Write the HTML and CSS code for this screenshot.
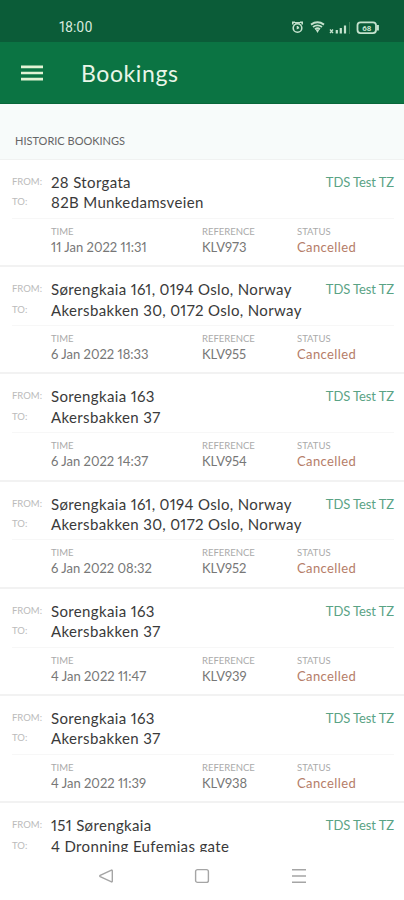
FILE: index.html
```html
<!DOCTYPE html>
<html lang="en">

<head>
    <meta charset="UTF-8">
    <meta name="viewport" content="width=device-width, initial-scale=1.0">
    <title>Bookings</title>
    <link rel="stylesheet" href="styles.css">
</head>

<body>

    <div class="status-bar">
        <span class="clock">18:00</span>
        <svg class="status-icons" width="90" height="18" viewBox="0 0 90 18" fill="none" stroke="#c5e2cd" stroke-width="1.6">
            <!-- Alarm -->
            <circle cx="7.5" cy="10" r="4.3" />
            <path d="M2.800 6.500V4.200h2.200M12.200 6.500V4.200h-2.200M5 4.800h5M7.500 8V10.300l1.600-.8" />
            <!-- Wifi -->
            <path d="M21 6.600q6.500-4.600 13 0M23 9q4.500-3.200 9 0M25 11.200q2.500-1.800 5 0" stroke-width="1.900" />
            <path d="M25.500 11.500h4l-2 3.500z" fill="#c5e2cd" stroke="none" />
            <!-- Signal -->
            <path d="M40 11.500l3 3.500M43 11.500l-3 3.500" stroke-width="1.300" />
            <path d="M46.800 15.500v-3.500M50.800 15.500v-5.500M55 15.500v-8" stroke-width="2.200" />
            <path d="M59.500 4v12" stroke="#3d8058" stroke-width="1" />
            <!-- Battery -->
            <rect x="67.500" y="4.300" width="18.500" height="10.800" rx="3" stroke-width="1.800" />
            <path d="M87.800 7v5.500" stroke-width="2.200" />
            <text class="battery-text" x="76.800" y="12.700" text-anchor="middle">68</text>
        </svg>
    </div>

    <header class="app-bar">
        <svg class="menu-icon" width="22" height="16" viewBox="0 0 22 16" stroke="#e2f3d4" stroke-width="2.600">
            <path d="M0 1.900h22M0 8h22M0 14.100h22" />
        </svg>
        <h1>Bookings</h1>
    </header>

    <h2 class="section-title">HISTORIC BOOKINGS</h2>

    <main class="bookings" id="bookings"></main>

    <nav class="nav-bar">
        <svg width="16" height="16" viewBox="0 0 16 16"><path d="M13.500 2.100L2.200 7.400q-.9.600 0 1.200l11.300 5.300q.8.200.8-.7V2.800q0-.9-.8-.7z" /></svg>
        <svg width="16" height="16" viewBox="0 0 16 16"><rect x="1.600" y="1.600" width="12.800" height="12.800" rx="2" /></svg>
        <svg width="16" height="16" viewBox="0 0 16 16"><path d="M1 1.700h14M1 8h14M1 14.300h14" /></svg>
    </nav>

    <script>
        const bookings = [
            ['28 Storgata', '82B Munkedamsveien', '11 Jan 2022 11:31', 'KLV973'],
            ['Sørengkaia 161, 0194 Oslo, Norway', 'Akersbakken 30, 0172 Oslo, Norway', '6 Jan 2022 18:33', 'KLV955'],
            ['Sorengkaia 163', 'Akersbakken 37', '6 Jan 2022 14:37', 'KLV954'],
            ['Sørengkaia 161, 0194 Oslo, Norway', 'Akersbakken 30, 0172 Oslo, Norway', '6 Jan 2022 08:32', 'KLV952'],
            ['Sorengkaia 163', 'Akersbakken 37', '4 Jan 2022 11:47', 'KLV939'],
            ['Sorengkaia 163', 'Akersbakken 37', '4 Jan 2022 11:39', 'KLV938'],
            ['151 Sørengkaia', '4 Dronning Eufemias gate']
        ];

        function details(time, reference) {
            return `
                <div class="details">
                    <div><small>TIME</small><p>${time}</p></div>
                    <div><small>REFERENCE</small><p>${reference}</p></div>
                    <div><small>STATUS</small><p class="cancelled">Cancelled</p></div>
                </div>`;
        }

        document.getElementById('bookings').innerHTML = bookings.map(([from, to, time, reference]) => `
            <article class="booking">
                <div class="route">
                    <span class="label">FROM:</span>
                    <span class="address">${from}</span>
                    <span class="account">TDS Test TZ</span>
                </div>
                <div class="route">
                    <span class="label">TO:</span>
                    <span class="address">${to}</span>
                </div>
                ${time ? details(time, reference) : ''}
            </article>`).join('');
    </script>

</body>

</html>
```

FILE: styles.css
```css
* {
    box-sizing: border-box;
    margin: 0;
    padding: 0;
}

body {
    display: flex;
    flex-direction: column;
    height: 900px;
    overflow: hidden;
    font-family: Lato, 'Open Sans', sans-serif;
    font-variant-numeric: proportional-nums;
    background-color: #fff;
    color: #3a3a3a;
}

.status-bar {
    flex: none;
    display: flex;
    justify-content: space-between;
    height: 42px;
    padding: 18px 24px 0 59px;
    background-color: #0b5c38;
}

.clock {
    font-family: Roboto, sans-serif;
    font-size: 13.8px;
    line-height: 19px;
    color: #d9eadf;
}

.battery-text {
    font: bold 8px Roboto, sans-serif;
    fill: #c5e2cd;
    stroke: none;
}

.app-bar {
    flex: none;
    display: flex;
    align-items: center;
    gap: 38px;
    height: 62px;
    padding-left: 21px;
    background-color: #0b7443;
    border-bottom: 1px solid #08673a;
}

.app-bar h1 {
    font-size: 23px;
    font-weight: 400;
    letter-spacing: 0.6px;
    color: #e9f6e8;
}

.section-title {
    flex: none;
    height: 56px;
    padding: 28px 15px 0;
    font-size: 11px;
    font-weight: 400;
    line-height: 18px;
    color: #666;
    background-color: #f7fbfa;
    border-bottom: 1px solid #f0f2f1;
}

.bookings {
    flex: none;
    height: 692px;
    overflow: hidden;
}

.booking {
    height: 107.2px;
    padding: 12px 10px 0 12px;
    border-bottom: 2px solid #f2f2f2;
}

.route {
    display: flex;
    height: 20.4px;
    line-height: 20px;
}

.label {
    width: 39px;
    font-size: 9.5px;
    color: #bbb;
}

.address {
    font-size: 15px;
    letter-spacing: 0.35px;
    white-space: nowrap;
}

.account {
    margin-left: auto;
    font-size: 13px;
    letter-spacing: -0.1px;
    color: #5aa385;
}

.details {
    display: grid;
    grid-template-columns: 151px 95px 1fr;
    margin-top: 5px;
    padding: 6px 0 0 39px;
    border-top: 1px solid #f7f7f7;
}

.details small {
    display: block;
    font-size: 9.5px;
    line-height: 14px;
    color: #aaa;
}

.details p {
    font-size: 13px;
    line-height: 17px;
    color: #777;
}

.details .cancelled {
    color: #b57d68;
    letter-spacing: 0.4px;
}

.nav-bar {
    flex: none;
    display: flex;
    justify-content: center;
    gap: 80.500px;
    height: 48px;
    padding-top: 16px;
    background-color: #fff;
}

.nav-bar svg {
    fill: none;
    stroke: #a5a5a5;
    stroke-width: 1.4;
}
```
